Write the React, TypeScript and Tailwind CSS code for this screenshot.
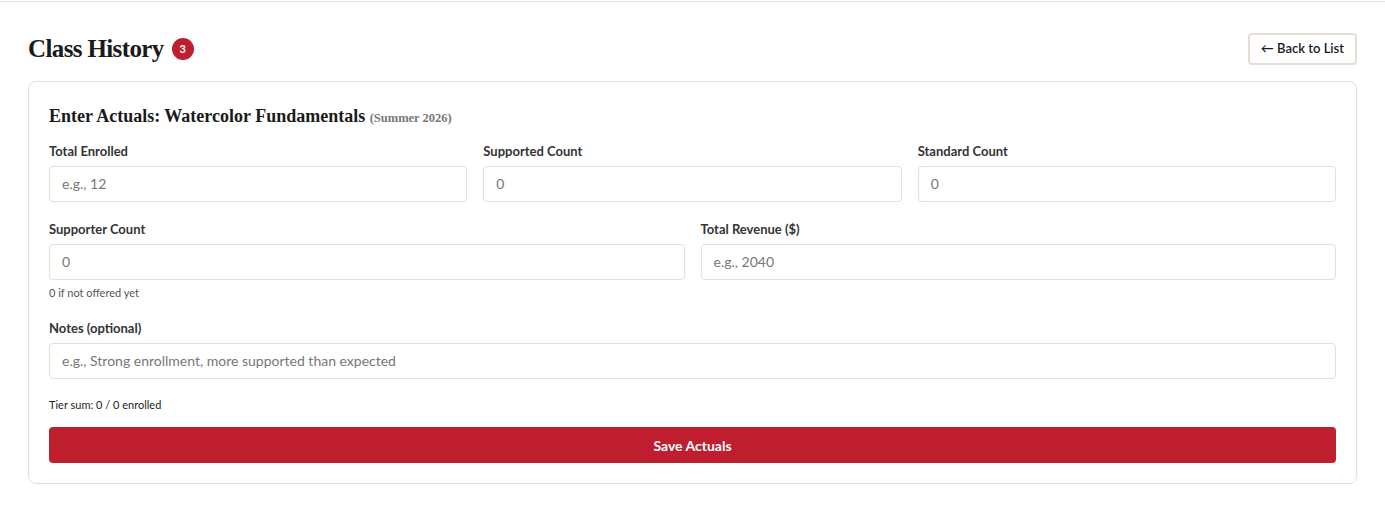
export default function App() {
  const serif = { fontFamily: '"Liberation Serif", "DejaVu Serif", serif' };
  return (
    <div
      className="min-h-screen bg-white border-t border-[#e6ded2] mt-px text-[#222]"
      style={{ fontFamily: 'Lato, "Noto Sans", sans-serif' }}
    >
      <main className="px-7 pt-7 pb-7">
        <header className="flex items-center justify-between mb-[13px]">
          <div className="flex items-center gap-2">
            <h1 style={serif} className="text-[25px] font-bold text-[#1a1a1a] tracking-tight">
              Class History
            </h1>
            <span className="w-[22px] h-[22px] rounded-full bg-[#be1e2d] text-white text-[11px] font-bold flex items-center justify-center">
              3
            </span>
          </div>
          <button className="h-[32px] px-[11px] rounded border-2 border-[#e6ded2] bg-white text-[13px] font-semibold text-[#1a1a1a]">
            ← Back to List
          </button>
        </header>

        <section className="rounded-lg border border-[#e6ded2] px-5 pt-5 pb-5">
          <h2 style={serif} className="text-[18px] font-bold text-[#1a1a1a] leading-7 mb-[10px]">
            Enter Actuals: Watercolor Fundamentals{" "}
            <span className="text-[12.5px] text-[#777]">(Summer 2026)</span>
          </h2>

          <div className="grid grid-cols-3 gap-4 mb-[18px]">
            <Field label="Total Enrolled" placeholder="e.g., 12" />
            <Field label="Supported Count" value="0" />
            <Field label="Standard Count" value="0" />
          </div>

          <div className="grid grid-cols-2 gap-4 mb-[18px]">
            <Field label="Supporter Count" value="0" hint="0 if not offered yet" />
            <Field label="Total Revenue ($)" placeholder="e.g., 2040" />
          </div>

          <Field label="Notes (optional)" placeholder="e.g., Strong enrollment, more supported than expected" />

          <p className="text-[11px] text-[#222] mt-[18px] mb-[14px]">Tier sum: 0 / 0 enrolled</p>

          <button className="w-full h-9 rounded bg-[#be1e2d] text-white text-[14px] font-bold">
            Save Actuals
          </button>
        </section>
      </main>
    </div>
  );
}

function Field({
  label,
  placeholder,
  value,
  hint,
}: {
  label: string;
  placeholder?: string;
  value?: string;
  hint?: string;
}) {
  return (
    <div>
      <label className="block text-[13px] font-bold text-[#333] leading-[18px] mb-[6px]">{label}</label>
      <div className="h-9 rounded border border-[#e6ded2] px-3 flex items-center text-[14px] text-[#777]">
        {value ?? placeholder}
      </div>
      {hint && <p className="text-[11px] text-[#555] mt-[5px] leading-4">{hint}</p>}
    </div>
  );
}
